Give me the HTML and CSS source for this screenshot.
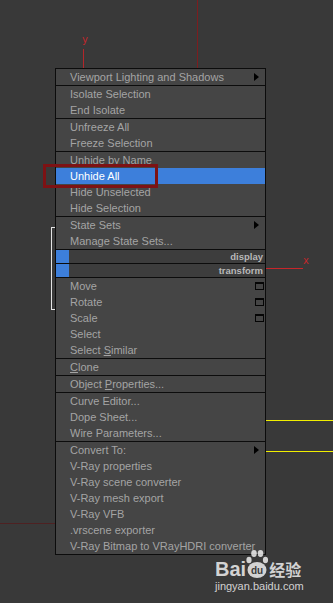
FILE: index.html
```html
<!DOCTYPE html>
<html lang="en">
<head>
    <meta charset="UTF-8">
    <meta name="viewport" content="width=device-width, initial-scale=1.0">
    <title>Viewport Quad Menu</title>
    <link rel="stylesheet" href="styles.css">
</head>
<body>

<div class="viewport">
    <!-- scene gizmo lines behind the menu -->
    <span class="axis axis-top"></span>
    <span class="axis axis-y"></span>
    <span class="axis-label label-y">y</span>
    <span class="axis axis-x"></span>
    <span class="axis-label label-x">x</span>
    <span class="guide guide-a"></span>
    <span class="guide guide-b"></span>
    <span class="ground"></span>
    <span class="bracket"></span>

    <div class="menu">
        <div class="group">
            <div class="item sub">Viewport Lighting and Shadows</div>
        </div>
        <div class="group">
            <div class="item">Isolate Selection</div>
            <div class="item">End Isolate</div>
        </div>
        <div class="group">
            <div class="item">Unfreeze All</div>
            <div class="item">Freeze Selection</div>
        </div>
        <div class="group">
            <div class="item">Unhide by Name</div>
            <div class="item active">Unhide All</div>
            <div class="item">Hide Unselected</div>
            <div class="item">Hide Selection</div>
        </div>
        <div class="group">
            <div class="item sub">State Sets</div>
            <div class="item">Manage State Sets...</div>
        </div>
        <div class="group toggle">
            <span class="swatch"></span><span class="toggle-label">display</span>
        </div>
        <div class="group toggle">
            <span class="swatch"></span><span class="toggle-label">transform</span>
        </div>
        <div class="group">
            <div class="item">Move<span class="win"></span></div>
            <div class="item">Rotate<span class="win"></span></div>
            <div class="item">Scale<span class="win"></span></div>
            <div class="item">Select</div>
            <div class="item"><span>Select <u>S</u>imilar</span></div>
        </div>
        <div class="group">
            <div class="item"><span><u>C</u>lone</span></div>
        </div>
        <div class="group">
            <div class="item"><span>Object <u>P</u>roperties...</span></div>
        </div>
        <div class="group">
            <div class="item">Curve Editor...</div>
            <div class="item">Dope Sheet...</div>
            <div class="item">Wire Parameters...</div>
        </div>
        <div class="group last">
            <div class="item sub">Convert To:</div>
            <div class="item">V-Ray properties</div>
            <div class="item">V-Ray scene converter</div>
            <div class="item">V-Ray mesh export</div>
            <div class="item">V-Ray VFB</div>
            <div class="item">.vrscene exporter</div>
            <div class="item">V-Ray Bitmap to VRayHDRI converter</div>
        </div>
    </div>

    <!-- red annotation box around the chosen item -->
    <span class="mark"></span>

    <div class="watermark">
        <div class="logo">
            <span class="logo-bai">Bai</span>
            <svg class="paw" width="22" height="30" viewBox="0 0 22 30">
                <ellipse cx="3" cy="11" rx="2.6" ry="3.2"/>
                <ellipse cx="8" cy="4.5" rx="2.8" ry="3.4"/>
                <ellipse cx="14.5" cy="4.5" rx="2.8" ry="3.4"/>
                <ellipse cx="19.5" cy="11" rx="2.6" ry="3.2"/>
                <ellipse cx="11" cy="21" rx="9.5" ry="8"/>
                <text x="11" y="25" text-anchor="middle">du</text>
            </svg>
            <span class="logo-cn">经验</span>
        </div>
        <div class="logo-url">jingyan.baidu.com</div>
    </div>
</div>

</body>
</html>
```

FILE: styles.css
```css
body {
    margin: 0;
    background-color: #393939;
    font-family: "Liberation Sans", Arial, sans-serif;
}
.viewport {
    position: relative;
    width: 333px;
    height: 603px;
    overflow: hidden;
    background-color: #393939;
}

/* scene lines */
.axis, .guide, .ground, .bracket {
    position: absolute;
    display: block;
}
.axis-top {
    left: 197px;
    top: 0;
    width: 1px;
    height: 68px;
    background-color: #7c1d1f;
}
.axis-y {
    left: 83px;
    top: 49px;
    width: 1px;
    height: 20px;
    background-color: #b3262a;
}
.axis-x {
    left: 266px;
    top: 268px;
    width: 37px;
    height: 1px;
    background-color: #c8262a;
}
.axis-label {
    position: absolute;
    font-family: "DejaVu Sans", sans-serif;
    font-size: 10px;
    line-height: 10px;
    color: #c0282c;
}
.label-y {
    left: 82px;
    top: 35px;
}
.label-x {
    left: 303px;
    top: 256px;
}
.guide {
    left: 266px;
    width: 67px;
    height: 1px;
    background-color: #f0ee00;
}
.guide-a {
    top: 420px;
}
.guide-b {
    top: 451px;
}
.ground {
    left: 0;
    top: 523px;
    width: 56px;
    height: 1px;
    background-color: #4e2122;
}
.bracket {
    left: 51px;
    top: 227px;
    width: 5px;
    height: 83px;
    border: 1px solid #e4e4e4;
    border-right: none;
    box-sizing: border-box;
}

/* quad menu */
.menu {
    position: absolute;
    left: 55px;
    top: 68px;
    width: 211px;
    box-sizing: border-box;
    border: 1px solid #0c0c0c;
    background-color: #454545;
    font-size: 11px;
    color: #a4a4a4;
}
.group {
    border-bottom: 1px solid #0c0c0c;
}
.group.last {
    border-bottom: none;
}
.item {
    display: flex;
    align-items: center;
    justify-content: space-between;
    height: 16px;
    line-height: 16px;
    padding: 0 1px 0 14px;
    white-space: nowrap;
}
.item u {
    text-decoration: underline;
    text-underline-offset: 1px;
}
.item.active {
    background-color: #3d7fdb;
    color: #ffffff;
}
.item.sub {
    padding-right: 6px;
}
.item.sub::after {
    content: "";
    width: 0;
    height: 0;
    border-left: 5px solid #000;
    border-top: 4.5px solid transparent;
    border-bottom: 4.5px solid transparent;
}
.win {
    width: 9px;
    height: 8px;
    box-sizing: border-box;
    border: 1px solid #050505;
    border-top-width: 2px;
}
.toggle {
    display: flex;
    height: 13px;
    background-color: #3d3d3d;
}
.swatch {
    width: 13px;
    background-color: #3d7fdb;
}
.toggle-label {
    flex: 1;
    text-align: right;
    padding-right: 2px;
    font-size: 9.5px;
    font-weight: bold;
    line-height: 13px;
    color: #b8b8b8;
}

.mark {
    position: absolute;
    left: 43px;
    top: 164px;
    width: 115px;
    height: 24px;
    box-sizing: border-box;
    border: 3px solid #7d1214;
}

/* watermark */
.watermark {
    position: absolute;
    left: 215px;
    top: 549px;
    color: rgba(255, 255, 255, 0.78);
}
.logo {
    display: flex;
    align-items: flex-end;
}
.logo-bai {
    font-size: 20px;
    font-weight: bold;
    line-height: 20px;
}
.paw {
    margin: 0 1px 0 0;
    fill: rgba(255, 255, 255, 0.78);
}
.paw text {
    font-family: "Liberation Sans", Arial, sans-serif;
    font-size: 10px;
    font-weight: bold;
    fill: #3b3b3b;
}
.logo-cn {
    font-family: "Noto Sans CJK SC", sans-serif;
    font-size: 16px;
    font-weight: bold;
    line-height: 20px;
}
.logo-url {
    margin-top: 1px;
    font-size: 11px;
    line-height: 12px;
}
```
